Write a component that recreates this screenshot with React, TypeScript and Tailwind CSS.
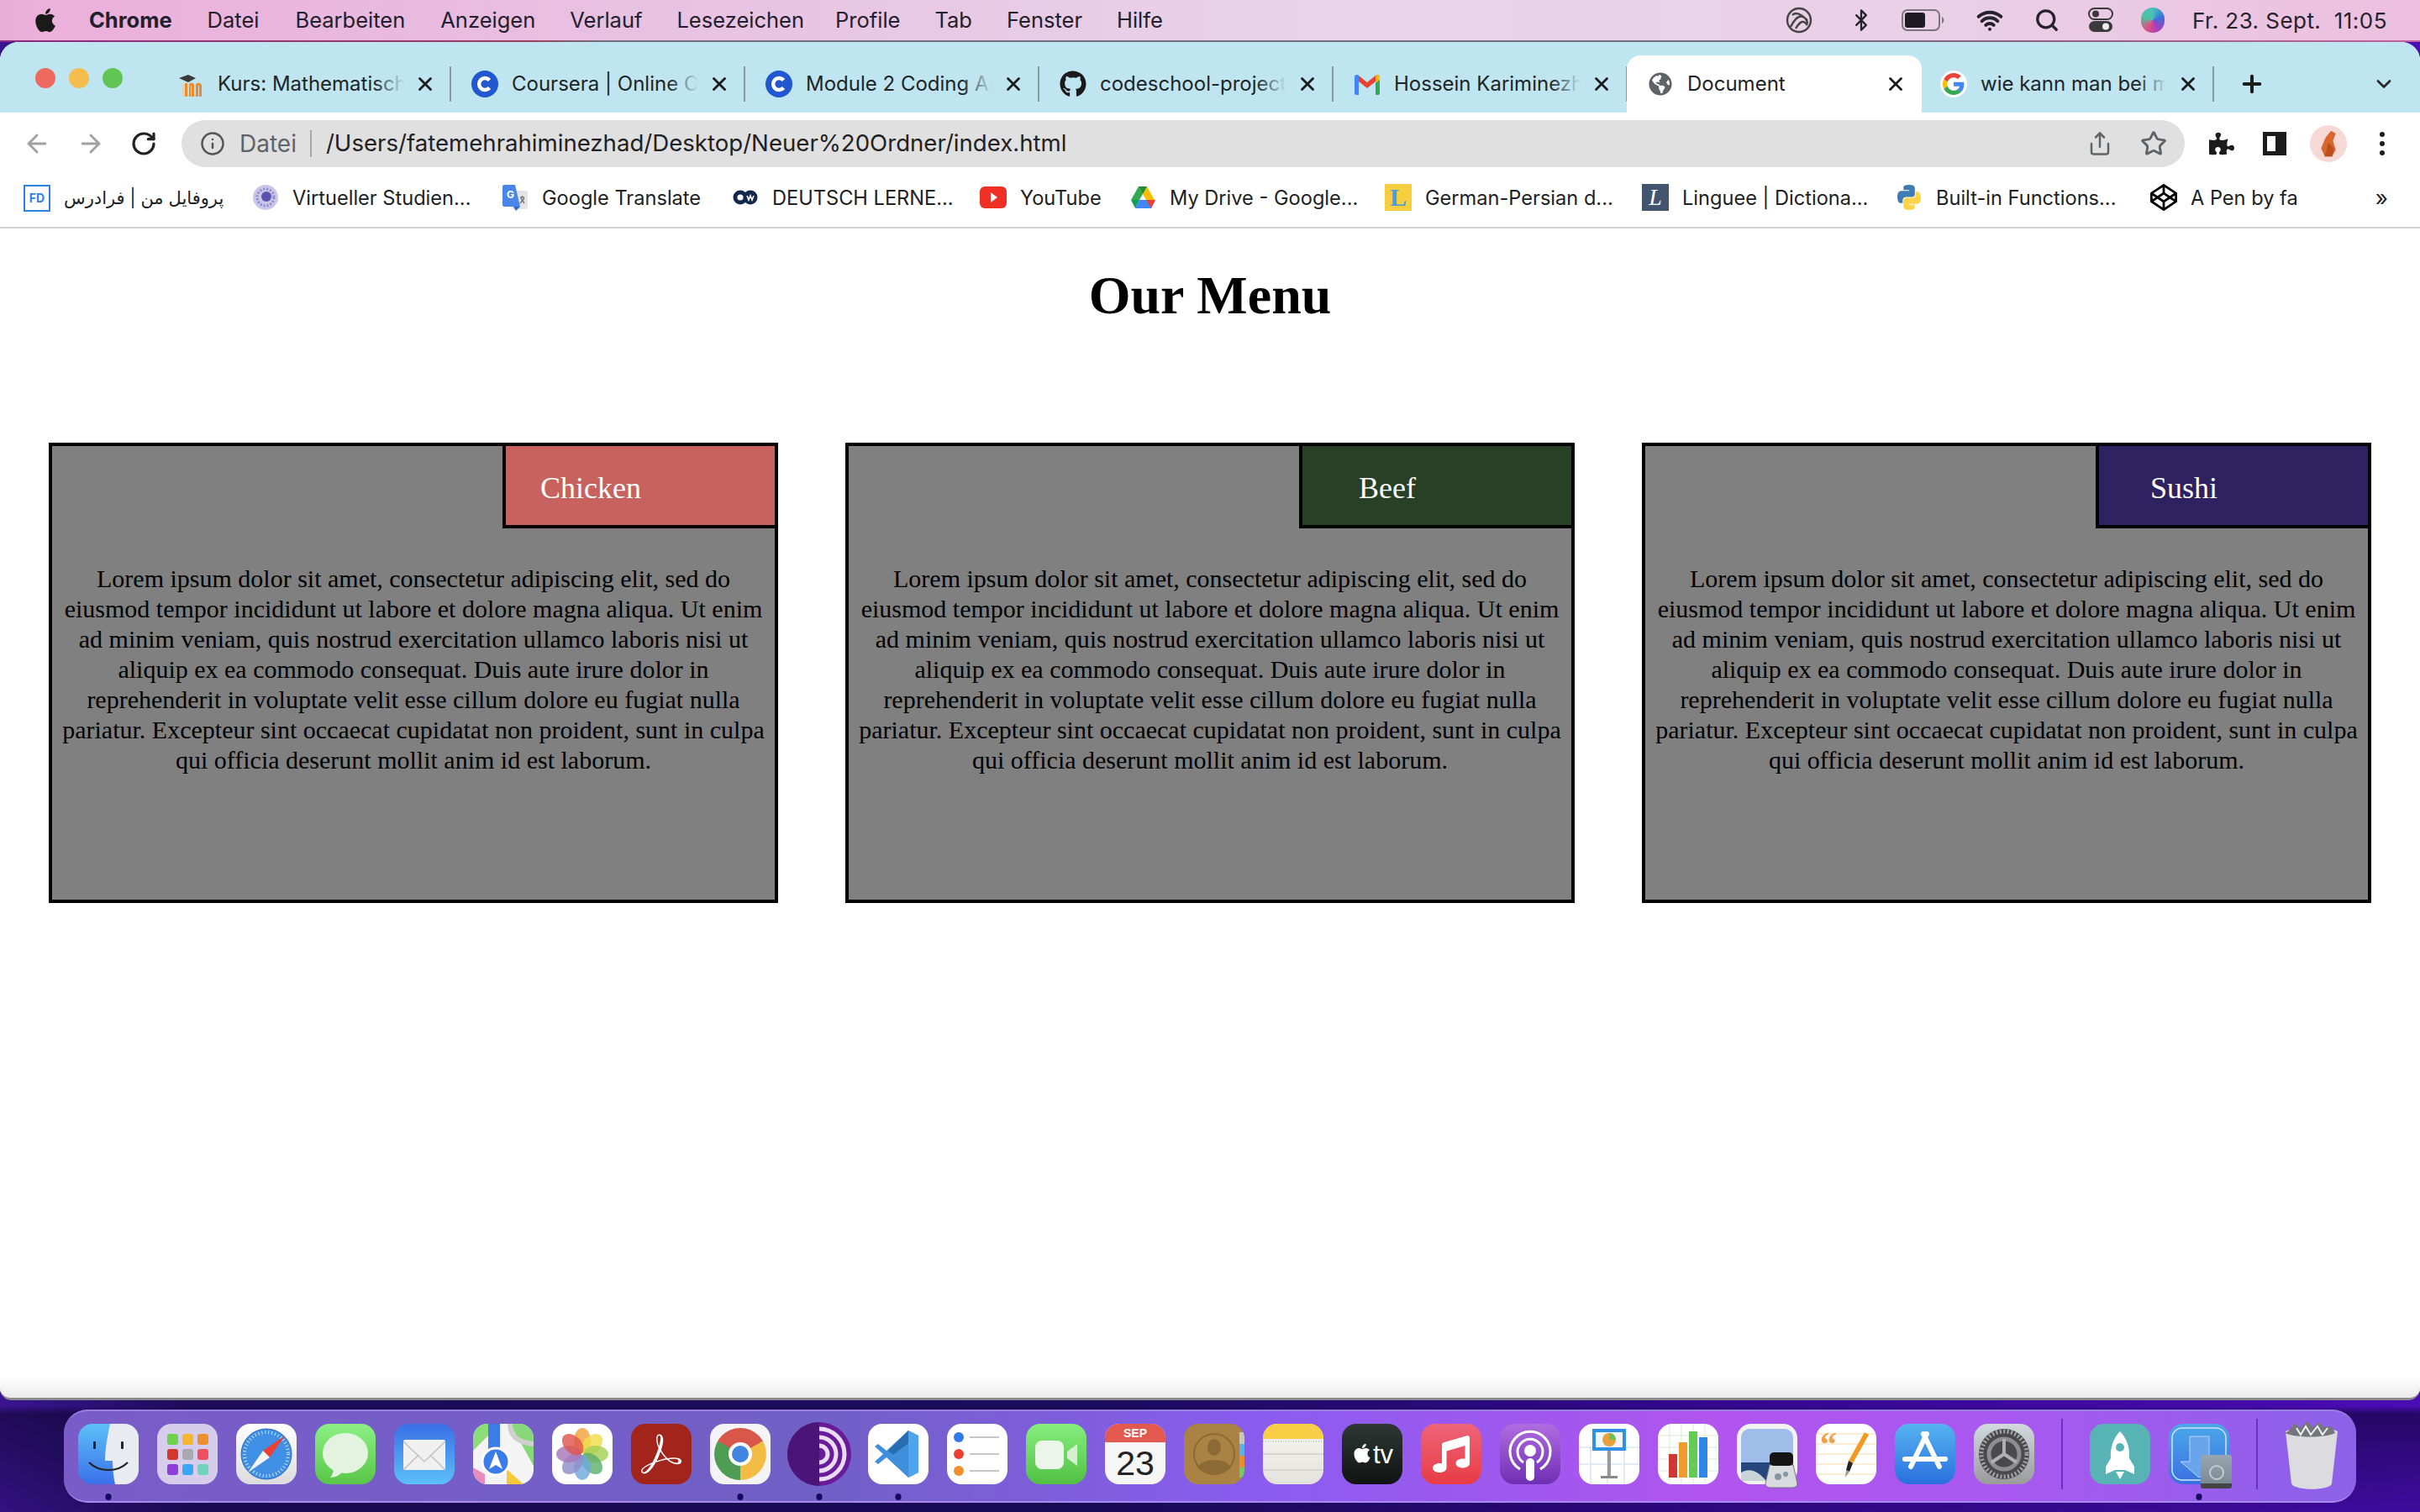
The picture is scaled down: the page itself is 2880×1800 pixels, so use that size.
import React from "react";
import { FaApple, FaGithub, FaPuzzlePiece, FaCodepen, FaGlobeAmericas, FaMusic } from "react-icons/fa";
import { SiAdobeacrobatreader } from "react-icons/si";
import { ArrowLeft, ArrowRight, RotateCw, Info, X, Plus, ChevronDown, Share, Star, Bluetooth, Search, Wifi } from "lucide-react";

const LOREM = "Lorem ipsum dolor sit amet, consectetur adipiscing elit, sed do eiusmod tempor incididunt ut labore et dolore magna aliqua. Ut enim ad minim veniam, quis nostrud exercitation ullamco laboris nisi ut aliquip ex ea commodo consequat. Duis aute irure dolor in reprehenderit in voluptate velit esse cillum dolore eu fugiat nulla pariatur. Excepteur sint occaecat cupidatat non proident, sunt in culpa qui officia deserunt mollit anim id est laborum.";

function Coursera() {
  return <svg viewBox="0 0 32 32" className="w-8 h-8"><circle cx="16" cy="16" r="16" fill="#2258cf" /><path d="M21.5 11.5a7 7 0 1 0 0 9" fill="none" stroke="#fff" strokeWidth="4.5" /></svg>;
}
function Moodle() {
  return <svg viewBox="0 0 32 32" className="w-8 h-8"><path d="M9 31V15h3v16zM14 31V17c0-3 6-3 6 0v14h-3V18h-1v13zM22 31V17c0-3 7-3 7 1v13h-3V18h-1v13z" fill="#ef8a2c" /><path d="M2 9l11-4 9 4-9 5z" fill="#3a3a3a" /><path d="M6 31V18l2-2v15z" fill="#f2c9a0" /></svg>;
}
function Gmail() {
  return <svg viewBox="0 0 32 32" className="w-8 h-8"><path d="M1 8c0-3 3-4 5-2v23H3c-1 0-2-1-2-2z" fill="#4285f4" /><path d="M31 8c0-3-3-4-5-2v23h3c1 0 2-1 2-2z" fill="#34a853" /><path d="M6 6l10 8 10-8v7l-10 8L6 13z" fill="#ea4335" /><path d="M26 6c2-2 5-1 5 2v3l-5 4z" fill="#fbbc04" /></svg>;
}
function GoogleG() {
  return (
    <div className="w-8 h-8 rounded-full bg-white flex items-center justify-center">
      <svg viewBox="0 0 48 48" className="w-[26px] h-[26px]">
        <path fill="#EA4335" d="M24 9.5c3.54 0 6.71 1.22 9.21 3.6l6.85-6.85C35.9 2.38 30.47 0 24 0 14.62 0 6.51 5.38 2.56 13.22l7.98 6.19C12.43 13.72 17.74 9.5 24 9.5z" />
        <path fill="#4285F4" d="M46.98 24.55c0-1.57-.15-3.09-.38-4.55H24v9.02h12.94c-.58 2.96-2.26 5.48-4.78 7.18l7.73 6c4.51-4.18 7.09-10.36 7.09-17.65z" />
        <path fill="#FBBC05" d="M10.53 28.59c-.48-1.45-.76-2.99-.76-4.59s.27-3.14.76-4.59l-7.98-6.19C.92 16.46 0 20.12 0 24c0 3.88.92 7.54 2.56 10.78l7.97-6.19z" />
        <path fill="#34A853" d="M24 48c6.48 0 11.93-2.13 15.89-5.81l-7.73-6c-2.15 1.45-4.92 2.3-8.16 2.3-6.26 0-11.57-4.22-13.47-9.91l-7.98 6.19C6.51 42.62 14.62 48 24 48z" />
      </svg>
    </div>
  );
}

const tabs = [
  { title: "Kurs: Mathematische", icon: <Moodle /> },
  { title: "Coursera | Online Courses", icon: <Coursera /> },
  { title: "Module 2 Coding Assignment", icon: <Coursera /> },
  { title: "codeschool-project", icon: <FaGithub className="w-8 h-8 text-[#1a1a1a]" /> },
  { title: "Hossein Kariminezhad", icon: <Gmail /> },
];

function Tab({ title, icon }: { title: string; icon: React.ReactNode }) {
  return (
    <div className="w-[350px] h-[68px] flex items-center relative shrink-0">
      <div className="ml-[24px] w-8 h-8 flex items-center justify-center shrink-0">{icon}</div>
      <div className="ml-[16px] w-[222px] overflow-hidden whitespace-nowrap text-[24px] text-[#202428] relative">
        {title}
        <div className="absolute right-0 top-0 bottom-0 w-[36px] bg-gradient-to-r from-transparent to-[#bfe6f0]" />
      </div>
      <X className="absolute left-[306px] w-[26px] h-[26px] text-[#1c1c1c]" strokeWidth={2.6} />
      <div className="absolute right-0 top-[13px] w-[2px] h-[42px] bg-[#8c9aa0]" />
    </div>
  );
}

function BmIcon({ kind }: { kind: string }) {
  if (kind === "fd") return <div className="w-8 h-8 border-2 border-[#2f7fe0] bg-white flex items-center justify-center"><div className="text-[14px] font-bold text-[#2f7fe0] leading-none">FD</div></div>;
  if (kind === "vs") return <svg viewBox="0 0 32 32" className="w-8 h-8"><circle cx="16" cy="16" r="15" fill="#c9c6ea" /><circle cx="16" cy="16" r="10" fill="none" stroke="#8f88cf" strokeWidth="3" strokeDasharray="2 2" /><circle cx="17" cy="15" r="6" fill="#5b52b0" /></svg>;
  if (kind === "gt") return <svg viewBox="0 0 32 32" className="w-8 h-8"><rect x="12" y="8" width="19" height="22" rx="2" fill="#e4e4e4" /><path d="M1 3c0-1 1-2 2-2h13l6 26H3c-1 0-2-1-2-2z" fill="#4a86e8" /><path d="M14 27h8l-5 5z" fill="#3367c9" /><text x="6" y="17" fontSize="12" fontWeight="700" fill="#fff" fontFamily="Inter">G</text><path d="M22 16l5 0M24.5 14v2M23 17l4 6M27 17l-5 6" stroke="#777" strokeWidth="1.4" fill="none" /></svg>;
  if (kind === "dw") return <svg viewBox="0 0 32 32" className="w-8 h-8"><circle cx="10" cy="16" r="8.5" fill="#12284c" /><circle cx="22" cy="16" r="8.5" fill="#12284c" /><circle cx="10" cy="16" r="3.6" fill="#fff" /><path d="M18 14l2 5 2-5 2 5 2-5" stroke="#fff" strokeWidth="1.6" fill="none" /></svg>;
  if (kind === "yt") return <svg viewBox="0 0 32 32" className="w-8 h-8"><rect x="0" y="3" width="32" height="26" rx="6" fill="#ee3124" /><path d="M13 10l8 6-8 6z" fill="#fff" /></svg>;
  if (kind === "dr") return <svg viewBox="0 0 32 32" className="w-8 h-8"><path d="M11 3h10l-9 16H2z" fill="#34a853" /><path d="M21 3l9 16H20L12 5z" fill="#fbbc04" /><path d="M21 3h-10l5 9z" fill="#1e8e3e" /><path d="M7 29l5-10h19l-5 10z" fill="#4285f4" /><path d="M2 19h10l-5 10z" fill="#0f9d58" /><path d="M20 19h11l-5 10z" fill="#ea4335" /></svg>;
  if (kind === "l") return <div className="w-8 h-8 bg-[#f7cf3e] flex items-center justify-center text-[30px] leading-none font-bold text-[#4a9ce0] [font-family:'Liberation_Serif',serif]">L</div>;
  if (kind === "li") return <div className="w-8 h-8 bg-[#41556f] flex items-center justify-center text-[28px] leading-none italic text-white [font-family:'Liberation_Serif',serif]">L</div>;
  if (kind === "py") return <svg viewBox="0 0 32 32" className="w-8 h-8"><path d="M15.9 1c-7 0-6.6 3-6.6 3v3.2h6.8v1H6.6S2 7.7 2 15.4s4 7.4 4 7.4h2.4v-3.3s-.1-4 3.9-4h6.7s3.8.1 3.8-3.6V4.8S23.4 1 15.9 1z" fill="#3f7cb0" /><path d="M16.1 31c7 0 6.6-3 6.6-3v-3.2h-6.8v-1h9.5s4.6.5 4.6-7.2-4-7.4-4-7.4h-2.4v3.3s.1 4-3.9 4h-6.7s-3.8-.1-3.8 3.6v6.1S8.6 31 16.1 31z" fill="#fcd34a" /></svg>;
  return <FaCodepen className="w-8 h-8 text-black" />;
}

const bookmarks = [
  { kind: "fd", label: "پروفایل من | فرادرس", cls: "w-[191px] text-[21px]" },
  { kind: "vs", label: "Virtueller Studien...", cls: "w-[216px] text-[23.6px]" },
  { kind: "gt", label: "Google Translate", cls: "w-[193px] text-[23.6px]" },
  { kind: "dw", label: "DEUTSCH LERNE...", cls: "w-[214px] text-[23.6px]" },
  { kind: "yt", label: "YouTube", cls: "w-[97px] text-[23.6px]" },
  { kind: "dr", label: "My Drive - Google...", cls: "w-[223px] text-[23.6px]" },
  { kind: "l", label: "German-Persian d...", cls: "w-[225px] text-[23.6px]" },
  { kind: "li", label: "Linguee | Dictiona...", cls: "w-[221px] text-[23.6px]" },
  { kind: "py", label: "Built-in Functions...", cls: "w-[222px] text-[23.6px]" },
  { kind: "cp", label: "A Pen by fa", cls: "w-[126px] text-[23.6px]" },
];

function Tile({ bg, children }: { bg: string; children?: React.ReactNode }) {
  return <div className={"w-[72px] h-[72px] rounded-[17px] overflow-hidden flex items-center justify-center shrink-0 " + bg}>{children}</div>;
}
function S({ children }: { children: React.ReactNode }) {
  return <svg viewBox="0 0 72 72" className="w-[72px] h-[72px]">{children}</svg>;
}

const petals = ["#f2a33c", "#f3dc4c", "#a5cf52", "#5fb06c", "#6fa8dc", "#8f8fc9", "#a878b8", "#e0564e"];

const dock: { el: React.ReactNode; dot?: boolean }[] = [
  { dot: true, el: <Tile bg="bg-[linear-gradient(180deg,#5cc0f8,#3a70ea)]"><S><path d="M38 0h34v72H44c-2-8-3-20-3-28h-9c0-14 3-30 6-44z" fill="#e8ecf2" /><rect x="18" y="21" width="3" height="9" rx="1" fill="#222" /><rect x="51" y="21" width="3" height="9" rx="1" fill="#222" /><path d="M13 46c12 12 34 12 46 0" stroke="#222" strokeWidth="2.2" fill="none" /></S></Tile> },
  { el: <Tile bg="bg-[#d6cdec]"><div className="grid grid-cols-3 gap-[5px]">{["bg-[#6ed14a]", "bg-[#f6b72f]", "bg-[#ee8e2c]", "bg-[#d2382c]", "bg-[#a8a8ae]", "bg-[#ee5060]", "bg-[#8d3ed8]", "bg-[#3aa6f6]", "bg-[#6ed4bc]"].map((c) => <div key={c} className={"w-[13px] h-[13px] rounded-[3px] " + c} />)}</div></Tile> },
  { el: <Tile bg="bg-[linear-gradient(180deg,#fff,#dcdcdc)]"><S><circle cx="36" cy="36" r="30" fill="#3f8fe4" stroke="#2c6cbe" /><circle cx="36" cy="36" r="26" fill="none" stroke="#cfe4f8" strokeWidth="4" strokeDasharray="1 3" /><path d="M58 14L32 32l8 8z" fill="#ee4036" /><path d="M14 58l18-26 8 8z" fill="#f4f4f4" /></S></Tile> },
  { el: <Tile bg="bg-[linear-gradient(180deg,#8cf084,#58c648)]"><S><ellipse cx="36" cy="35" rx="27" ry="24" fill="#e4f3e0" /><path d="M22 52c0 6-2 9-4 12 6 0 12-3 15-8z" fill="#e4f3e0" /></S></Tile> },
  { el: <Tile bg="bg-[linear-gradient(180deg,#3a6fe6,#5cc0f8)]"><S><rect x="11" y="19" width="50" height="36" rx="2" fill="#f0f0f0" /><path d="M11 21l25 24 25-24M11 55l18-18M61 55L43 37" stroke="#bdbdbd" strokeWidth="1.2" fill="none" /></S></Tile> },
  { el: <Tile bg="bg-[#f4f4f4]"><S><path d="M44 0h28v50z" fill="#86d878" /><path d="M0 0h18v14L0 32z" fill="#8cdc78" /><path d="M0 52l14 8v12H0z" fill="#e88cc0" /><path d="M40 72V54l20 18z" fill="#f5c93c" /><rect x="18" y="0" width="14" height="40" fill="#3a7de8" /><path d="M44 0c0 14 8 22 28 24" stroke="#cfcfcf" strokeWidth="6" fill="none" /><circle cx="27" cy="45" r="16" fill="#3a7de8" stroke="#fff" strokeWidth="3" /><path d="M27 33l8 21-8-5-8 5z" fill="#fff" /></S></Tile> },
  { el: <Tile bg="bg-white"><S>{petals.map((c, i) => <ellipse key={c} cx="36" cy="20" rx="10" ry="15" fill={c} opacity="0.82" transform={`rotate(${i * 45} 36 36)`} />)}</S></Tile> },
  { el: <Tile bg="bg-[#a3241a]"><SiAdobeacrobatreader className="w-[48px] h-[48px] text-white" /></Tile> },
  { dot: true, el: <Tile bg="bg-[#f4f4f6]"><div className="w-[62px] h-[62px] rounded-full bg-[conic-gradient(from_300deg,#d9574a_0_120deg,#f2bd42_120deg_240deg,#4f9d55_240deg_360deg)] flex items-center justify-center"><div className="w-[28px] h-[28px] rounded-full bg-[#4285e0] border-[4px] border-white" /></div></Tile> },
  { dot: true, el: <div className="w-[76px] h-[76px] -my-[2px] -mx-[2px] shrink-0"><svg viewBox="0 0 76 76" className="w-[76px] h-[76px]"><circle cx="38" cy="38" r="38" fill="#6a1b9a" /><path d="M0 38a38 38 0 0 1 38-38v76A38 38 0 0 1 0 38z" fill="#4a1478" /><path d="M38 8a30 30 0 0 1 0 60M38 18a20 20 0 0 1 0 40M38 28a10 10 0 0 1 0 20" fill="none" stroke="#eadcf4" strokeWidth="5" /></svg></div> },
  { dot: true, el: <Tile bg="bg-white"><S><path d="M48 8l12 6v44l-12 6L22 40 12 48l-4-3 10-9L8 27l4-3 10 8z" fill="#3f8fdc" /><path d="M48 8L24 32l6 5 18-14z" fill="#2a6cb0" /><path d="M48 8l12 6v44l-12 6z" fill="#4ea5ee" /></S></Tile> },
  { el: <Tile bg="bg-white"><S><circle cx="14" cy="16" r="6" fill="#2f7ae8" /><circle cx="14" cy="36" r="6" fill="#ea3f32" /><circle cx="14" cy="56" r="6" fill="#f0902c" /><path d="M27 16h35M27 36h35M27 56h35" stroke="#c6c6c6" strokeWidth="2" /></S></Tile> },
  { el: <Tile bg="bg-[linear-gradient(180deg,#86ee7e,#52c044)]"><S><rect x="11" y="20" width="34" height="34" rx="8" fill="#ecf5ea" /><path d="M49 33l12-9v26l-12-9z" fill="#d8eed4" /></S></Tile> },
  { el: <div className="w-[72px] h-[72px] rounded-[17px] overflow-hidden bg-[#f6f6f6] flex flex-col shrink-0"><div className="h-[22px] bg-[#e4594f] flex items-center justify-center text-white text-[14px] font-bold [font-family:'Liberation_Sans',sans-serif]">SEP</div><div className="flex-1 flex items-center justify-center text-[#222] text-[41px] leading-none [font-family:'Liberation_Sans',sans-serif]">23</div></div> },
  { el: <Tile bg="bg-[#a98244]"><S><path d="M66 10h6v14h-6z" fill="#c8c8c8" /><path d="M66 24h6v14h-6z" fill="#5cb0ee" /><path d="M66 38h6v14h-6z" fill="#e89030" /><path d="M66 52h6v12h-6z" fill="#74c868" /><circle cx="36" cy="36" r="24" fill="none" stroke="#8c6a36" strokeWidth="2" /><ellipse cx="36" cy="28" rx="8" ry="10" fill="#8c6a36" /><path d="M16 52c6-12 34-12 40 0-10 10-30 10-40 0z" fill="#8c6a36" /></S></Tile> },
  { el: <Tile bg="bg-[linear-gradient(180deg,#f6f6f2,#e4e2dc)]"><S><rect width="72" height="18" fill="#f8cf44" /><path d="M0 36h72M0 55h72" stroke="#d6d6d2" strokeWidth="2" /><path d="M0 21h72" stroke="#bbb" strokeWidth="1.5" strokeDasharray="1 2" /></S></Tile> },
  { el: <Tile bg="bg-[linear-gradient(180deg,#2e3734,#101312)]"><FaApple className="w-[26px] h-[26px] text-white -mt-[3px]" /><span className="text-white text-[31px] leading-none [font-family:'Liberation_Sans',sans-serif]">tv</span></Tile> },
  { el: <Tile bg="bg-[linear-gradient(180deg,#ee6478,#e83c44)]"><FaMusic className="w-[44px] h-[44px] text-white" /></Tile> },
  { el: <Tile bg="bg-[linear-gradient(180deg,#b06ce0,#6f2fb4)]"><S><path d="M24 54a24 24 0 1 1 24 0M28 46a15 15 0 1 1 16 0" fill="none" stroke="#fff" strokeWidth="3" /><circle cx="36" cy="32" r="7" fill="#fff" /><rect x="31" y="41" width="10" height="27" rx="5" fill="#fff" /></S></Tile> },
  { el: <Tile bg="bg-white"><S><path d="M0 28h72M0 48h72M14 28v44M34 28v44M54 28v44" stroke="#d7e6f4" strokeWidth="1.5" /><rect x="16" y="6" width="40" height="26" fill="#2f90e8" /><rect x="20" y="10" width="32" height="18" fill="#f2f6fa" /><circle cx="36" cy="19" r="8" fill="#e8a03c" /><path d="M36 11a8 8 0 0 1 8 8h-8z" fill="#6fbf5a" /><rect x="34" y="32" width="4" height="32" fill="#999" /><rect x="26" y="62" width="20" height="3" fill="#888" /></S></Tile> },
  { el: <Tile bg="bg-white"><S><path d="M0 14h72M0 28h72M0 42h72M0 56h72M14 0v72M28 0v72M42 0v72M56 0v72" stroke="#d6ecd2" strokeWidth="1" /><rect x="13" y="36" width="10" height="28" fill="#cf3636" /><rect x="25" y="22" width="10" height="42" fill="#ee9c30" /><rect x="37" y="9" width="10" height="55" fill="#62cc54" /><rect x="49" y="16" width="10" height="48" fill="#2f88e8" /></S></Tile> },
  { el: <div className="relative w-[72px] h-[72px] shrink-0"><Tile bg="bg-[#f2f2f2]"><S><rect x="5" y="6" width="62" height="62" rx="10" fill="#a0bce8" /><path d="M5 46h62v22H5z" fill="#26477e" /><path d="M5 58c10-6 20-2 30 10H5z" fill="#c8d4d8" /></S></Tile><svg viewBox="0 0 44 44" className="absolute left-[31px] top-[33px] w-[44px] h-[44px]"><path d="M8 16h28l5 22c0 3-3 5-6 5H9c-3 0-6-2-6-5z" fill="#d8dcdf" stroke="#777" /><rect x="8" y="1" width="28" height="16" rx="5" fill="#141414" /><circle cx="18" cy="30" r="4" fill="#8796a4" /><circle cx="27" cy="27" r="3" fill="#8796a4" /></svg></div> },
  { el: <Tile bg="bg-white"><S><path d="M0 12h72M0 24h72M0 36h72M0 48h72M0 60h72" stroke="#fbe6c6" strokeWidth="1.5" /><text x="5" y="38" fontSize="40" fontWeight="700" fill="#eda04a" fontFamily="Liberation Serif">“</text><path d="M58 10l5 3-19 34-5-3z" fill="#f09a24" /><path d="M39 44l5 3-4 10-4-2z" fill="#222" /><path d="M36 55l4 2-5 7z" fill="#999" /></S></Tile> },
  { el: <Tile bg="bg-[linear-gradient(180deg,#56b4f0,#2a6fe0)]"><S><path d="M34 12l19 39M38 12L19 51M12 42h48" stroke="#fff" strokeWidth="6" strokeLinecap="round" fill="none" /></S></Tile> },
  { el: <Tile bg="bg-[linear-gradient(180deg,#d2dade,#9a9a9a)]"><S><circle cx="36" cy="36" r="30" fill="#4a4a4c" /><circle cx="36" cy="36" r="27" fill="none" stroke="#a6a6a8" strokeWidth="5" strokeDasharray="2 2.5" /><circle cx="36" cy="36" r="18" fill="none" stroke="#8e8e90" strokeWidth="5" /><path d="M36 36V18M36 36L21 46M36 36l15 10" stroke="#b0b0b2" strokeWidth="4" /></S></Tile> },
  { el: <div className="w-[2px] h-[84px] bg-[#6f2cc8] mx-[10px] shrink-0" /> },
  { el: <Tile bg="bg-[#58b4b4]"><S><path d="M36 9c8 8 12 20 11 32l6 10v9l-11-5H30l-11 5v-9l6-10c-1-12 3-24 11-32z" fill="#fff" /><circle cx="36" cy="28" r="5" fill="#58b4b4" /><path d="M31 57h10l-5 9z" fill="#fff" /></S></Tile> },
  { dot: true, el: <div className="relative w-[72px] h-[72px] shrink-0"><Tile bg="bg-[linear-gradient(180deg,#4ca8ea,#3a6fe0)]"><S><rect x="4" y="5" width="64" height="62" rx="12" fill="none" stroke="#cfe6fa" strokeWidth="1.5" /><path d="M25 15h23v30h12L36 64 14 45h11z" fill="#6aa4ec" stroke="#b4d4f4" /></S></Tile><div className="absolute left-[38px] top-[37px] w-[37px] h-[40px] bg-[linear-gradient(180deg,#98a6b0,#7c8a94)] rounded-[3px] border-b-[6px] border-[#444]"><div className="w-[18px] h-[18px] mt-[12px] mx-auto rounded-full border-2 border-[#c4ccd2]" /></div></div> },
  { el: <div className="w-[2px] h-[84px] bg-[#6f2cc8] mx-[10px] shrink-0" /> },
  { el: <div className="w-[64px] h-[83px] -my-[6px] shrink-0"><svg viewBox="0 0 64 83" className="w-[64px] h-[83px]"><path d="M1 14c10-6 52-6 62 0l-7 62c-1 9-46 9-48 0z" fill="#dcdce0" /><path d="M4 14l8-10 6 6 8-8 8 7 7-6 6 6 9-1 4 8c-12 6-46 6-60 0z" fill="#74767c" /><path d="M14 10l5 8 6-10 6 10 8-10 6 10 6-8" stroke="#f0f0f0" strokeWidth="2" fill="none" /></svg></div> },
];

function Card({ name, color }: { name: string; color: string }) {
  return (
    <div className="w-[868px] h-[548px] border-4 border-black bg-[#808080] flex flex-col items-end">
      <div className={"w-[324px] h-[98px] border-l-4 border-b-4 border-black flex items-center pt-[5px] " + color}>
        <div className="w-[202px] text-center text-white text-[36px] leading-none">{name}</div>
      </div>
      <p className="w-full mt-[42px] px-[8px] text-center text-black text-[30px] leading-[36px]">{LOREM}</p>
    </div>
  );
}

export default function App() {
  const ui = "[font-family:Inter,'Noto_Sans',sans-serif]";
  return (
    <div className={"w-[2880px] h-[1800px] overflow-hidden flex flex-col bg-[linear-gradient(180deg,transparent_93%,rgba(10,4,40,0.55)_93.5%,rgba(10,4,40,0.15)_100%),linear-gradient(90deg,#3a1490_0%,#1c0c5a_8%,#1a0c5e_45%,#34088e_70%,#4a0cb4_100%)] " + ui}>
      {/* menu bar */}
      <div className="h-[48px] shrink-0 flex items-center bg-[linear-gradient(90deg,#ebaedb_0%,#e8c0e2_25%,#e8d3e9_55%,#ead0e6_80%,#ecbfe0_100%)] text-[25.5px] text-[#22202a]">
        <FaApple className="ml-[40px] w-[28px] h-[32px] text-[#1a1a1a]" />
        <div className="ml-[38px] flex gap-[41px] whitespace-nowrap">
          <span className="font-bold mr-[1px]">Chrome</span>
          <span className="mr-[2px]">Datei</span><span className="mr-[1px]">Bearbeiten</span><span>Anzeigen</span><span>Verlauf</span><span className="mr-[-4px]">Lesezeichen</span><span>Profile</span><span>Tab</span><span>Fenster</span><span>Hilfe</span>
        </div>
        <div className="ml-auto mr-[38px] flex items-center text-[#25222c]">
          <svg viewBox="0 0 40 32" className="w-[40px] h-[32px]"><circle cx="20" cy="16" r="14" fill="none" stroke="#444" strokeWidth="2.4" /><path d="M10 24c8-16 14-14 20-8M12 10c6-6 18 4 18 10M16 26c6-10 10-10 14-4" stroke="#444" strokeWidth="2.4" fill="none" /></svg>
          <Bluetooth className="ml-[40px] w-[28px] h-[30px]" strokeWidth={2} />
          <svg viewBox="0 0 52 30" className="ml-[34px] w-[52px] h-[30px]"><rect x="1" y="3" width="44" height="24" rx="6" fill="none" stroke="#7b757b" strokeWidth="2" /><rect x="4" y="6" width="24" height="18" rx="3" fill="#1e1c22" /><path d="M48 11c3 1 3 7 0 8z" fill="#7b757b" /></svg>
          <Wifi className="ml-[35px] w-[36px] h-[32px]" strokeWidth={3} />
          <Search className="ml-[35px] w-[30px] h-[30px]" strokeWidth={2.6} />
          <svg viewBox="0 0 30 30" className="ml-[34px] w-[30px] h-[30px]"><rect x="1" y="1" width="28" height="13" rx="6.5" fill="none" stroke="#3a3a3a" strokeWidth="2" /><circle cx="9" cy="7.5" r="4" fill="#3a3a3a" /><rect x="1" y="16" width="28" height="13" rx="6.5" fill="#3a3a3a" /><circle cx="21" cy="22.5" r="4" fill="#eee" /></svg>
          <div className="ml-[33px] w-[28px] h-[30px] rounded-full bg-[conic-gradient(#4ac0c0,#3a70d8,#a040c0,#e05080,#50c0a0,#4ac0c0)]" />
          <span className="ml-[33px] w-[233px] whitespace-pre text-[26px] tracking-[0.45px]">Fr. 23. Sept.  11:05</span>
        </div>
      </div>
      <div className="h-[2px] shrink-0 bg-[linear-gradient(90deg,#8a2a80_0%,#9a4060_22%,#70707a_25%,#70707a_75%,#906080_85%,#c060a0_100%)]" />

      {/* window */}
      <div className="h-[1617px] shrink-0 rounded-t-[22px] rounded-b-[14px] overflow-hidden flex flex-col bg-white border-b-[3px] border-[#8a8a8a]">
        <div className="h-[84px] shrink-0 bg-[#bfe6f0] flex items-end pl-[187px] relative">
          <div className="absolute left-[42px] top-[31px] flex gap-[16px]">
            <div className="w-[24px] h-[24px] rounded-full bg-[#ef6a5e]" />
            <div className="w-[24px] h-[24px] rounded-full bg-[#f5bd4f]" />
            <div className="w-[24px] h-[24px] rounded-full bg-[#61c554]" />
          </div>
          {tabs.map((t) => <Tab key={t.title} {...t} />)}
          <div className="w-[351px] h-[68px] ml-[-1px] bg-white rounded-t-[16px] flex items-center relative shrink-0 z-10">
            <FaGlobeAmericas className="ml-[26px] w-[28px] h-[28px] text-[#5f6368]" />
            <span className="ml-[18px] text-[24px] text-[#202428]">Document</span>
            <X className="absolute left-[307px] w-[26px] h-[26px] text-[#1c1c1c]" strokeWidth={2.6} />
          </div>
          <div className="w-[348px] h-[68px] flex items-center relative shrink-0">
            <div className="ml-[22px] shrink-0"><GoogleG /></div>
            <div className="ml-[16px] w-[222px] overflow-hidden whitespace-nowrap text-[24px] text-[#202428] relative">
              wie kann man bei mir
              <div className="absolute right-0 top-0 bottom-0 w-[36px] bg-gradient-to-r from-transparent to-[#bfe6f0]" />
            </div>
            <X className="absolute left-[304px] w-[26px] h-[26px] text-[#1c1c1c]" strokeWidth={2.6} />
            <div className="absolute right-0 top-[13px] w-[2px] h-[42px] bg-[#8c9aa0]" />
          </div>
          <Plus className="ml-[29px] mb-[18px] w-[32px] h-[32px] text-[#1c1c1c]" strokeWidth={3} />
          <ChevronDown className="ml-[127px] mb-[20px] w-[28px] h-[28px] text-[#2a2a2a]" strokeWidth={2.4} />
        </div>

        {/* toolbar */}
        <div className="h-[70px] shrink-0 flex items-center pt-[4px]">
          <ArrowLeft className="ml-[27px] w-[34px] h-[34px] text-[#a0a0a0]" strokeWidth={2} />
          <ArrowRight className="ml-[30px] w-[34px] h-[34px] text-[#a0a0a0]" strokeWidth={2} />
          <RotateCw className="ml-[30px] w-[32px] h-[32px] text-[#222]" strokeWidth={2.4} />
          <div className="ml-[29px] w-[2384px] h-[56px] rounded-full bg-[#e0e0e0] flex items-center relative">
            <Info className="ml-[22px] w-[30px] h-[30px] text-[#555]" strokeWidth={2} />
            <span className="ml-[17px] text-[28px] text-[#5f6368]">Datei</span>
            <div className="ml-[16px] w-[2px] h-[32px] bg-[#a8a8a8]" />
            <span className="ml-[17px] text-[27.6px] text-[#202124]">/Users/fatemehrahiminezhad/Desktop/Neuer%20Ordner/index.html</span>
            <Share className="absolute left-[2268px] w-[30px] h-[34px] text-[#5f6368]" strokeWidth={2} />
            <Star className="absolute left-[2331px] w-[32px] h-[32px] text-[#5f6368]" strokeWidth={2.2} />
          </div>
          <FaPuzzlePiece className="ml-[29px] w-[30px] h-[30px] text-[#1c1c1c]" />
          <div className="ml-[34px] w-[28px] h-[28px] border-[5px] border-[#1c1c1c] border-r-[13px]" />
          <div className="ml-[28px] w-[44px] h-[44px] rounded-full bg-[#f6d8d4] flex items-center justify-center overflow-hidden">
            <svg viewBox="0 0 24 30" className="w-[26px] h-[38px]"><path d="M15 1l5 3-3 8 3 10-4 7H8L4 20 9 8z" fill="#d9662c" /><path d="M12 14l6 6-2 9H8z" fill="#b94f1e" /></svg>
          </div>
          <div className="ml-[39px] flex flex-col gap-[5px]">
            <div className="w-[6px] h-[6px] rounded-full bg-[#1c1c1c]" /><div className="w-[6px] h-[6px] rounded-full bg-[#1c1c1c]" /><div className="w-[6px] h-[6px] rounded-full bg-[#1c1c1c]" />
          </div>
        </div>

        {/* bookmarks */}
        <div className="h-[68px] shrink-0 flex items-center pl-[28px] pb-[3px] border-b-2 border-[#d0d0d0] relative">
          {bookmarks.map((b) => (
            <div key={b.label} className="flex items-center mr-[33px] shrink-0">
              <BmIcon kind={b.kind} />
              <span className={"ml-[16px] whitespace-nowrap text-[#202124] [font-family:Inter,'DejaVu_Sans',sans-serif] " + b.cls}>{b.label}</span>
            </div>
          ))}
          <span className="absolute right-[38px] text-[26px] text-[#222]">»</span>
        </div>

        {/* page */}
        <div className="flex-1 min-h-0 [font-family:'Liberation_Serif',serif]">
          <h1 className="mt-[44px] text-center font-bold text-[64px] leading-[72px] text-black">Our Menu</h1>
          <div className="mt-[139px] px-[58px] flex gap-[80px]">
            <Card name="Chicken" color="bg-[#c8625e]" />
            <Card name="Beef" color="bg-[#284126]" />
            <Card name="Sushi" color="bg-[#2e2260]" />
          </div>
        </div>
        <div className="h-[26px] shrink-0 bg-gradient-to-b from-white to-[#ebebeb]" />
      </div>

      {/* dock */}
      <div className="mt-[11px] ml-[76px] w-[2728px] h-[111px] rounded-[28px] flex items-center pl-[17px] gap-[22px] border-t-2 border-b-2 border-t-[#9a80e0] border-b-[#a88af0] bg-[linear-gradient(90deg,#7a5cc8_0%,#7060c6_33%,#8a5cee_52%,#b055ee_72%,#a858f0_85%,#8c62e8_100%)]">
        {dock.map((d, i) => (
          <div key={i} className="relative shrink-0 -mt-[5px] flex items-center">
            {d.el}
            {d.dot && <div className="absolute left-1/2 -translate-x-1/2 -bottom-[19px] w-[7px] h-[8px] rounded-full bg-[#15085e]" />}
          </div>
        ))}
      </div>
    </div>
  );
}
